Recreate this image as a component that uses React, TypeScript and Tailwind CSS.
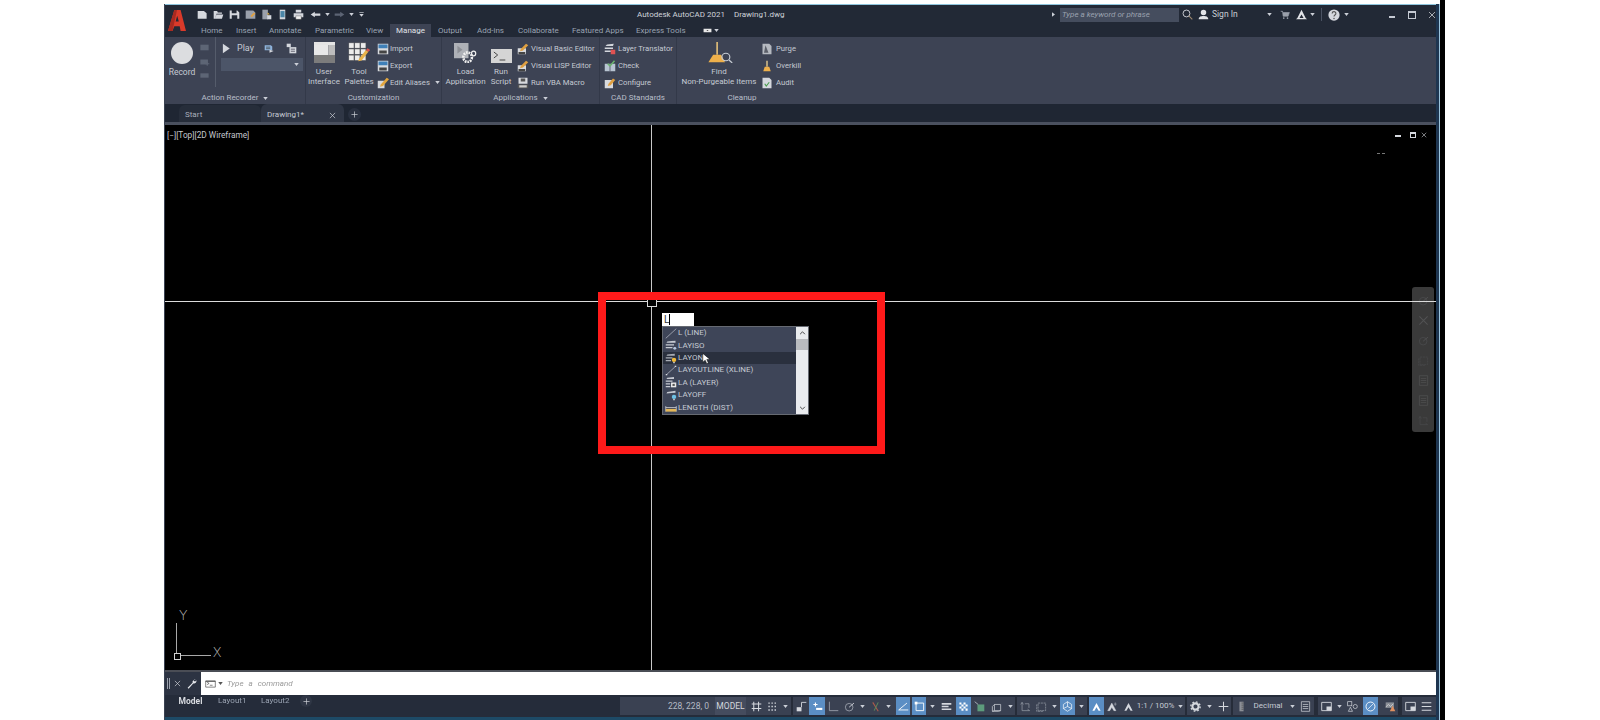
import React from "react";

const L = "#d5d8de";
const G = "#9aa0ab";
const B = "#8fb4dc";
const icons: Record<string, React.ReactNode> = {
  file: <path d="M1 3h9l4 3v8H1z" fill={L} />,
  open: <path d="M1 3h5l1 2h6v2H5l-2 7H1zM5 8h10l-2 6H3z" fill={L} />,
  save: <path d="M1 2h11l3 3v9H1zM4 2v4h7V2zM4 9v5h8V9z" fill={L} fillRule="evenodd" />,
  saveas: <g><path d="M1 2h11l3 3v9H1z" fill={G} /><path d="M8 10l5-5 2 2-5 5z" fill="#e0a040" /></g>,
  plot: <g><path d="M2 1h8v14H2z" fill={G} /><path d="M9 9h6v6H9z" fill={L} /><path d="M10 5l3 3H9z" fill="#e0b040" /></g>,
  phone: <g><path d="M4 1h8v14H4z" fill={L} /><path d="M5 3h6v9H5z" fill="#4b86a8" /></g>,
  print: <g><path d="M4 1h8v4H4zM1 6h14v6H1z" fill={L} /><path d="M4 10h8v5H4z" fill="#f2f2f2" stroke="#333" strokeWidth=".5" /></g>,
  undo: <path d="M7 3L1 8l6 5v-3h8V6H7z" fill={L} />,
  redo: <path d="M9 3l6 5-6 5v-3H1V6h8z" fill="#5c6474" />,
  qcaret: <g><path d="M3 3h10v1.5H3z" fill={L} /><path d="M3 7h10l-5 6z" fill={L} /></g>,
  square: <rect x="2" y="3" width="12" height="10" fill="#5d6575" />,
  stack: <g><path d="M2 4h11v8H2z" fill="#5d6575" /><path d="M9 10h6v1.5H9zM11.2 8h1.5v6h-1.5z" fill="#5d6575" /></g>,
  play: <path d="M3 1l11 7-11 7z" fill={L} />,
  playlist: <g><path d="M1 2h9l2 2v6H1z" fill={B} /><path d="M3 5h6M3 7.5h6" stroke="#333" /><path d="M8 9l6 2-6 3z" fill={L} /></g>,
  tab: <g><path d="M1 1h6v5H1z" fill={L} /><path d="M5 6h10v9H5z" fill={L} /><path d="M7 9h6M7 12h6" stroke="#334" /></g>,
  ui: <g><path d="M0 0h22v3H0z" fill="#e5e5e5" /><path d="M0 3h15v10H0z" fill="#e8e8e8" /><path d="M15 3h7v10h-7z" fill="#bdbdbd" /><path d="M0 13h22v8H0z" fill="#7c7c7c" /></g>,
  palette: <g>{[1, 8, 15].flatMap((x) => [1, 8, 15].map((y) => <rect key={`${x}${y}`} x={x} y={y} width="6" height="6" fill="#ececec" stroke="#555" strokeWidth=".5" />))}<path d="M13 19l8-10 3 2-8 10-4 1z" fill="#e8b24a" /><path d="M21 9l2-2 3 2-2 2z" fill="#d9534f" /></g>,
  imp: <g><path d="M1 1h14v14H1z" fill="#d8dade" /><path d="M2 2h12v5H2z" fill="#3f80b8" /><path d="M3 10h10v4H3z" fill="#444" /></g>,
  alias: <g><path d="M1 5h9v10H1z" fill="#d8dade" /><path d="M5 10l8-9 3 2-8 9-4 1z" fill="#e3a63d" /></g>,
  load: <g><path d="M0 0h17v16H0z" fill="#aeb1b7" /><path d="M4 3l6 4-6 4z" fill="#8d9096" /><circle cx="16" cy="15" r="5" fill="none" stroke="#f0f0f0" strokeWidth="3" strokeDasharray="2 1" /><circle cx="23" cy="11" r="2.5" fill="none" stroke="#f0f0f0" strokeWidth="1.4" /></g>,
  script: <g><path d="M0 0h22v14H0z" fill="#d5d5d5" /><path d="M3 3l4 3-4 3M9 11h6" stroke="#444" fill="none" /></g>,
  vb: <g><path d="M1 7h11v8H1z" fill="#d8dade" /><path d="M5 8l7-7 3 2-7 7-4 1z" fill="#e0a040" /><path d="M2 12h9v3H2z" fill="#444" /></g>,
  vba: <g><path d="M2 1h12v8H2z" fill="#d8dade" /><path d="M5 2h6v4H5z" fill="#555" /><path d="M1 10h14v5H1z" fill="#555" /><path d="M3 11h10v3H3z" fill="#ccc" /></g>,
  layer: <g><path d="M4 2l9-1-1 3H2zM1 6h11v2H1zM1 10h8v2H1z" fill="#d4d7dd" /><path d="M9 9h6v6H9z" fill="#e05252" /></g>,
  check: <g><path d="M1 5h14v10H1z" fill="#b8c4d2" /><path d="M8 5v10" stroke="#445" /><path d="M5 5l3 3 6-7" stroke="#69b36b" strokeWidth="2" fill="none" /></g>,
  conf: <g><path d="M1 4h11v11H1z" fill="#d8dade" /><path d="M6 9l6-7 3 2-6 7-4 1z" fill="#e0a040" /></g>,
  broom: <g><path d="M13 0h2v17h-2z" fill="#e6c27a" /><path d="M9 17h10l5 10H3z" fill="#eeb04b" /><circle cx="25" cy="20" r="5" fill="none" stroke="#c7ccd3" strokeWidth="1.5" /><path d="M29 24l4 4" stroke="#c7ccd3" strokeWidth="1.5" /></g>,
  purge: <g><path d="M2 1h9l3 3v11H2z" fill="#b5b9c0" /><path d="M6 3l4 10H4z" fill="#5b5f69" /></g>,
  over: <g><path d="M7 1h2v8H7z" fill="#d9c08a" /><path d="M5 9h6l2 6H3z" fill="#eeb04b" /></g>,
  audit: <g><path d="M2 1h9l3 3v11H2z" fill="#d5d8de" /><path d="M5 9l2 3 4-5" stroke="#4a9c4f" strokeWidth="1.5" fill="none" /></g>,
  search: <g><circle cx="6.5" cy="6.5" r="5" fill="none" stroke={L} strokeWidth="1.3" /><path d="M10 10l5 5" stroke="#9f8a70" strokeWidth="1.6" /></g>,
  user: <path d="M8 1a3.6 3.6 0 110 8 3.6 3.6 0 010-8zM1 15c0-4 3-5 7-5s7 1 7 5z" fill="#e2e4e8" />,
  cart: <g><path d="M1 2h3l1 8h8l2-6H5" fill={G} stroke={G} /><circle cx="6" cy="13" r="1.3" fill={G} /><circle cx="12" cy="13" r="1.3" fill={G} /></g>,
  aca: <path d="M8 1l6 12h-3L8 8l-3 5H2zM0 15l2-2h12l2 2z" fill="#e2e4e8" />,
  help: <g><circle cx="8" cy="8" r="7.5" fill="#d5d8de" /><path d="M5.5 6a2.5 2.5 0 115 0c0 2-2.5 2-2.5 4" stroke="#555" strokeWidth="1.5" fill="none" /><circle cx="8" cy="12.6" r="1" fill="#555" /></g>,
  logo: <g><path d="M4 22L11 0h7l6 22h-6l-1-5h-6l-2 5zM12.500 12h3.500l-1.800-6z" fill="#d93a2a" fillRule="evenodd" /><path d="M4 22L11 0h3L9 22z" fill="#a82a20" /></g>,
  grid: <path d="M4 1v14M11 1v14M1 4.500h14M1 11h14" stroke={L} strokeWidth="1.5" />,
  dots: <path d="M2 3h12M2 8h12M2 13h12" stroke={L} strokeWidth="2" strokeDasharray="2 2.500" />,
  infer: <g><path d="M1 9h7v6H1z" fill={L} /><path d="M8 9V2h7" stroke={L} fill="none" strokeWidth="1.3" /></g>,
  snapm: <g><path d="M2 5h6M5 2v6" stroke="#fff" strokeWidth="1.600" /><path d="M6 10h9v3H6z" fill="#fff" /></g>,
  ortho: <path d="M2 1v13h13" stroke={G} fill="none" strokeWidth="1.300" />,
  polar: <g><circle cx="7.500" cy="9" r="5.500" fill="none" stroke={G} strokeWidth="1.300" /><path d="M7.500 9l7-6" stroke={L} strokeWidth="1.300" /></g>,
  osnap: <g><path d="M4 2l8 13" stroke="#b05a4a" strokeWidth="1.500" /><path d="M12 2L6 14" stroke="#5d8c5d" strokeWidth="1.500" /></g>,
  angle: <path d="M1 13h14M1 13L13 3" stroke="#fff" fill="none" strokeWidth="1.300" />,
  isoBox: <g><path d="M3 3h11v11H3z" fill="none" stroke="#fff" strokeWidth="1.300" /><path d="M1 1h4v4H1z" fill="#fff" /></g>,
  lines: <path d="M1 3h14v2.500H1zM1 7h10v2H1zM1 11h14v2H1z" fill={L} />,
  checker: <path d="M2 2h3v3H2zM8 2h3v3H8zM5 5h3v3H5zM11 5h3v3h-3zM2 8h3v3H2zM8 8h3v3H8zM5 11h3v3H5zM11 11h3v3h-3z" fill="#fff" />,
  greenBox: <g><path d="M5 5h10v10H5z" fill="#5d9c7c" /><path d="M1 1l5 4" stroke={L} /></g>,
  cube: <path d="M5 5h9v9H5zM5 5l-3 3v7h9l3-1M2 15l3-1" stroke={L} fill="none" />,
  move: <path d="M3 2v12h11M3 2l-2 3M3 2l2 3M14 14l-3-2M7 4h6v6" stroke={G} fill="none" />,
  dashBox: <path d="M3 3h11v11H3zM1 5v10h10" stroke={G} fill="none" strokeDasharray="3 1" />,
  gizmo: <g><path d="M8 1l6 4v6l-6 4-6-4V5z" fill="none" stroke="#fff" /><path d="M8 8V1M8 8l-6 3M8 8l6 3" stroke="#fff" /></g>,
  an1: <path d="M8 3l6 11h-3L8 9l-3 5H2z" fill="#fff" />,
  an2: <path d="M7 3l6 11h-3L7 9l-3 5H1zM12 2v5M10 4.500h4" stroke={L} fill={L} strokeWidth=".6" />,
  an3: <path d="M8 3l6 11h-3L8 9l-3 5H2z" fill={L} />,
  gear: <g><circle cx="8" cy="8" r="4.500" fill="none" stroke={L} strokeWidth="3" /><circle cx="8" cy="8" r="6.800" fill="none" stroke={L} strokeWidth="2" strokeDasharray="2.500 2.800" /></g>,
  plus: <path d="M8 1v14M1 8h14" stroke={L} strokeWidth="1.500" />,
  ruler: <g><path d="M5 1h6v14H5z" fill="#8c8f96" /><path d="M8 3h3M8 6h3M8 9h3M8 12h3" stroke="#444" /></g>,
  sheet: <g><path d="M2 1h12v14H2z" fill="none" stroke={L} /><path d="M4 5h8M4 8h8M4 11h8" stroke={L} /></g>,
  vpbox: <g><path d="M1 2h14v12H1z" fill="none" stroke={L} strokeWidth="1.300" /><path d="M8 8h7v6H8z" fill={L} /></g>,
  shapes: <g><rect x="1" y="1" width="6" height="6" fill="none" stroke={L} /><circle cx="12" cy="8" r="3" fill="none" stroke={L} /><path d="M5 9l3 6H2z" fill="none" stroke={L} /></g>,
  ring: <g><circle cx="8" cy="8" r="6.500" fill="none" stroke="#fff" strokeWidth="1.300" /><path d="M4 12l8-8" stroke="#fff" /></g>,
  graph: <g><path d="M1 2h12v8H1z" fill="#8b8f97" /><path d="M1 9l4-4 3 3 4-4" stroke="#ddd" fill="none" /><path d="M11 7l4 8H7z" fill="#e09060" /></g>,
  menu: <path d="M1 2.500h14M1 8h14M1 13.500h14" stroke={L} strokeWidth="1.500" />,
  line: <path d="M1 15L15 1" stroke="#b9bec8" strokeWidth="1" />,
  layiso: <g><path d="M3 2l11-1v3H2zM1 6h11v2H1zM1 10h9v2H1z" fill="#c6cad2" /><circle cx="13" cy="12" r="2" fill="#b7c7de" /></g>,
  layon: <g><path d="M3 2l10-1v3H2zM1 6h9v2H1zM1 10h7v2H1z" fill="#a8acb5" /><circle cx="12" cy="10" r="3" fill="#f0b93a" /><path d="M11 13h2v2h-2z" fill="#ddd" /></g>,
  xline: <g><path d="M2 14L14 2" stroke="#b9bec8" /><path d="M1 13h2v2H1zM13 1h2v2h-2z" fill="#d8dbe0" /></g>,
  laylayer: <g><path d="M3 1l9-1v3H2zM1 5h9v2H1zM1 9h6v2H1zM1 13h6v2H1z" fill="#c6cad2" /><path d="M8 8h7v7H8z" fill="#e8e8e8" /><path d="M10 10h3v3h-3z" fill="#555" /></g>,
  layoff: <g><path d="M3 3l11-2v3l-12 1z" fill="#c6cad2" /><circle cx="12" cy="10" r="3" fill="#6ec1e4" /><path d="M11 13h2v2h-2z" fill="#ddd" /></g>,
  dist: <g><path d="M1 6v8M15 6v8M1 8h14" stroke="#d8dbe0" /><path d="M1 10h14v4H1z" fill="#e3b758" /></g>,
  term: <g><path d="M1 3h14v10H1z" fill="#fff" stroke="#444" /><path d="M3 5l3 2-3 2M7 10h4" stroke="#444" fill="none" /><path d="M1 3h14v1.500H1z" fill="#555" /></g>,
  wrench: <path d="M14 1a4 4 0 00-5 5L1 14l1.500 1.500L10 7a4 4 0 005-5l-2 2-2-1-.5-1.500z" fill="#e8eaee" />,
  x: <path d="M2 2l12 12M14 2L2 14" stroke={L} strokeWidth="1.500" />,
  tray: <g><path d="M1 4h14v8H1z" fill="#e8e8e8" /><path d="M6 9l2-2 2 2z" fill="#333" /></g>,
};

function Ico({ n, c = "w-[12px] h-[12px]", vb = "0 0 16 16" }: { n: string; c?: string; vb?: string }) {
  return (
    <svg viewBox={vb} className={`${c} shrink-0`} preserveAspectRatio="none">
      {icons[n]}
    </svg>
  );
}

function Caret({ c = "" }: { c?: string }) {
  return (
    <svg viewBox="0 0 6 4" className={`w-[5px] h-[3px] shrink-0 ${c}`}>
      <path d="M0 0h6L3 4z" fill="#ccd0d8" />
    </svg>
  );
}

function SmallRow({ n, t, gap, caret }: { n: string; t: string; gap: string; caret?: boolean }) {
  return (
    <div className={`h-[17px] flex items-center whitespace-nowrap text-[7.7px] ${gap}`}>
      <Ico n={n} />
      <span>{t}</span>
      {caret && <Caret c="ml-[4px]" />}
    </div>
  );
}

function Big({ w, n, ic, vb, a, b }: { w: string; n: string; ic: string; vb: string; a: string; b: string }) {
  return (
    <div className={`${w} flex flex-col items-center shrink-0`}>
      <div className="h-[30px] w-full flex items-end justify-center pb-[4px]">
        <Ico n={n} c={ic} vb={vb} />
      </div>
      <div className="h-[10px] leading-[10px]">{a}</div>
      <div className="h-[10px] leading-[10px] whitespace-nowrap">{b}</div>
    </div>
  );
}

function Panel({ w, label, caret, last, children }: { w: string; label: string; caret?: boolean; last?: boolean; children: React.ReactNode }) {
  return (
    <div className={`${w} h-full shrink-0 flex flex-col ${last ? "" : "border-r border-[#333949]"}`}>
      <div className="h-[53px] flex">{children}</div>
      <div className="h-[14px] flex items-center justify-center gap-[5px] text-[#b9bfca] leading-none pt-[2px]">
        <span>{label}</span>
        {caret && <Caret />}
      </div>
    </div>
  );
}

const qat: string[] = ["file", "open", "save", "saveas", "plot", "phone", "print"];

const mainTabs: [string, string][] = [
  ["Home", "w-[35px]"], ["Insert", "w-[33px]"], ["Annotate", "w-[46px]"], ["Parametric", "w-[51px]"], ["View", "w-[24px]"],
];
const mainTabs2: [string, string][] = [
  ["Output", "w-[39px]"], ["Add-ins", "w-[41px]"], ["Collaborate", "w-[54px]"], ["Featured Apps", "w-[64px]"], ["Express Tools", "w-[59px]"],
];

type S = { k: string; w: string; n?: string; on?: boolean; c?: boolean; t?: string; sep?: boolean };
const st: S[] = [
  { k: "a", w: "w-[15px]", n: "grid" },
  { k: "b", w: "w-[16px]", n: "dots" },
  { k: "c", w: "w-[11px]", c: true },
  { k: "d", w: "w-[2px]", sep: true },
  { k: "e", w: "w-[16px]", n: "infer" },
  { k: "f", w: "w-[16px]", n: "snapm", on: true },
  { k: "g", w: "w-[16px]", n: "ortho" },
  { k: "h", w: "w-[16px]", n: "polar" },
  { k: "i", w: "w-[10px]", c: true },
  { k: "j", w: "w-[16px]", n: "osnap" },
  { k: "l", w: "w-[11px]", c: true },
  { k: "m", w: "w-[2px]" },
  { k: "n", w: "w-[14px]", n: "angle", on: true },
  { k: "o", w: "w-[2px]" },
  { k: "p", w: "w-[14px]", n: "isoBox", on: true },
  { k: "q", w: "w-[12px]", c: true },
  { k: "r", w: "w-[16px]", n: "lines" },
  { k: "s", w: "w-[2px]" },
  { k: "t", w: "w-[15px]", n: "checker", on: true },
  { k: "u", w: "w-[17px]", n: "greenBox" },
  { k: "v", w: "w-[17px]", n: "cube" },
  { k: "w", w: "w-[10px]", c: true },
  { k: "x", w: "w-[2px]", sep: true },
  { k: "y", w: "w-[16px]", n: "move" },
  { k: "z", w: "w-[16px]", n: "dashBox" },
  { k: "aa", w: "w-[11px]", c: true },
  { k: "ab", w: "w-[15px]", n: "gizmo", on: true },
  { k: "ac", w: "w-[12px]", c: true },
  { k: "ad", w: "w-[2px]", sep: true },
  { k: "ae", w: "w-[15px]", n: "an1", on: true },
  { k: "af", w: "w-[16px]", n: "an2" },
  { k: "ag", w: "w-[16px]", n: "an3" },
  { k: "ah", w: "w-[39px]", t: "1:1 / 100%" },
  { k: "ai", w: "w-[10px]", c: true },
  { k: "aj", w: "w-[2px]", sep: true },
  { k: "ak", w: "w-[16px]", n: "gear" },
  { k: "al", w: "w-[12px]", c: true },
  { k: "am", w: "w-[16px]", n: "plus" },
  { k: "an", w: "w-[2px]", sep: true },
  { k: "ao", w: "w-[16px]", n: "ruler" },
  { k: "ap", w: "w-[38px]", t: "Decimal" },
  { k: "aq", w: "w-[10px]", c: true },
  { k: "ar", w: "w-[17px]", n: "sheet" },
  { k: "as", w: "w-[4px]", sep: true },
  { k: "at", w: "w-[17px]", n: "vpbox" },
  { k: "au", w: "w-[9px]", c: true },
  { k: "av", w: "w-[17px]", n: "shapes" },
  { k: "aw", w: "w-[2px]" },
  { k: "ax", w: "w-[15px]", n: "ring", on: true },
  { k: "ay", w: "w-[4px]" },
  { k: "az", w: "w-[16px]", n: "graph" },
  { k: "ba", w: "w-[4px]", sep: true },
  { k: "bb", w: "w-[16px]", n: "vpbox" },
  { k: "bc", w: "w-[1px]" },
  { k: "bd", w: "w-[14px]", n: "menu" },
];

const acRows: [string, string, boolean][] = [
  ["line", "L (LINE)", false],
  ["layiso", "LAYISO", false],
  ["layon", "LAYON", true],
  ["xline", "LAYOUTLINE (XLINE)", false],
  ["laylayer", "LA (LAYER)", false],
  ["layoff", "LAYOFF", false],
  ["dist", "LENGTH (DIST)", false],
];

export default function App() {
  return (
    <div className="w-[1600px] h-[720px] bg-white flex overflow-hidden font-['Roboto',sans-serif] text-[8px] text-[#c5cad3]">
      <div className="w-[164px] shrink-0" />
      <div className="w-[1272px] h-[716px] mt-[4px] shrink-0 flex flex-col blur-[0.4px] border-l border-[#3a4252]">
        {/* title bar */}
        <div className="h-[20px] shrink-0 bg-[#222936] border-t border-[#8ec5dd] flex items-center relative">
          <div className="w-[29px] shrink-0" />
          {qat.map((n) => (
            <div key={n} className="w-[16px] flex justify-center shrink-0">
              <Ico n={n} c="w-[11px] h-[11px]" />
            </div>
          ))}
          <div className="ml-[4px] flex items-center gap-[4px]">
            <Ico n="undo" c="w-[11px] h-[9px]" />
            <Caret />
            <Ico n="redo" c="w-[11px] h-[9px]" />
            <Caret />
            <Ico n="qcaret" c="w-[7px] h-[7px]" />
          </div>
          <div className="ml-[272px] whitespace-nowrap text-[8px] text-[#cfd3da] w-[150px] flex gap-[9px] shrink-0">
            <span>Autodesk AutoCAD 2021</span>
            <span>Drawing1.dwg</span>
          </div>
          <svg viewBox="0 0 4 6" className="ml-[265px] w-[3px] h-[5px] shrink-0"><path d="M0 0l4 3-4 3z" fill="#ccd0d8" /></svg>
          <div className="ml-[5px] w-[119px] h-[14px] bg-[#454d5e] italic text-[#9aa1ae] px-[2px] flex items-center whitespace-nowrap shrink-0">Type a keyword or phrase</div>
          <Ico n="search" c="ml-[3px] w-[11px] h-[11px]" />
          <Ico n="user" c="ml-[5px] w-[11px] h-[11px]" />
          <span className="ml-[3px] text-[8.5px] text-[#c9ced6] w-[60px]">Sign In</span>
          <Caret />
          <Ico n="cart" c="ml-[8px] w-[10px] h-[10px]" />
          <Ico n="aca" c="ml-[6px] w-[11px] h-[11px]" />
          <Caret c="ml-[3px]" />
          <div className="ml-[6px] w-[1px] h-[13px] bg-[#4a5262]" />
          <Ico n="help" c="ml-[6px] w-[12px] h-[12px]" />
          <Caret c="ml-[4px]" />
          <div className="ml-[40px] w-[6px] h-[2px] bg-[#c5cad3] mt-[5px]" />
          <div className="ml-[13px] w-[9px] h-[8px] border border-[#c5cad3] border-t-2" />
          <Ico n="x" c="ml-[12px] w-[8px] h-[8px]" />
          <div className="absolute left-[3px] top-[5px]">
            <Ico n="logo" c="w-[18px] h-[21px]" vb="4 0 20 22" />
          </div>
        </div>
        {/* tabs */}
        <div className="h-[13px] shrink-0 bg-[#222936] flex items-center text-[#9aa3b2]">
          <div className="w-[36px] shrink-0" />
          {mainTabs.map(([t, w]) => (
            <div key={t} className={`${w} shrink-0 whitespace-nowrap`}>{t}</div>
          ))}
          <div className="w-[41px] h-full shrink-0 bg-[#3d4354] text-[#e0e3e8] flex items-center justify-center">Manage</div>
          <div className="w-[7px] shrink-0" />
          {mainTabs2.map(([t, w]) => (
            <div key={t} className={`${w} shrink-0 whitespace-nowrap`}>{t}</div>
          ))}
          <Ico n="tray" c="ml-[8px] w-[9px] h-[7px]" />
          <Caret c="ml-[2px]" />
        </div>
        {/* ribbon */}
        <div className="h-[67px] shrink-0 bg-[#3d4354] flex">
          <Panel w="w-[141px]" label="Action Recorder" caret>
            <div className="w-[34px] flex flex-col items-center pt-[5px] shrink-0">
              <div className="w-[22px] h-[22px] rounded-full bg-[#dcdde0]" />
              <div className="mt-[3px] leading-[10px] text-[8.5px]">Record</div>
            </div>
            <div className="w-[17px] border-r border-[#555c6b] h-[50px] flex flex-col items-start gap-[5px] pt-[6px] shrink-0">
              <Ico n="square" c="w-[11px] h-[9px]" />
              <Ico n="stack" c="w-[11px] h-[10px]" />
              <Ico n="square" c="w-[11px] h-[7px]" />
            </div>
            <div className="pl-[5px] pt-[3px]">
              <div className="h-[16px] flex items-center text-[9px] pt-[1px]">
                <Ico n="play" c="w-[10px] h-[11px]" />
                <span className="ml-[6px]">Play</span>
                <Ico n="playlist" c="ml-[10px] w-[11px] h-[10px]" />
                <Ico n="tab" c="ml-[11px] w-[11px] h-[11px]" />
              </div>
              <div className="mt-[2px] w-[82px] h-[13px] bg-[#4c5568] flex items-center justify-end pr-[4px]">
                <Caret />
              </div>
            </div>
          </Panel>
          <Panel w="w-[136px]" label="Customization">
            <Big w="w-[36px]" n="ui" ic="w-[21px] h-[21px]" vb="0 0 22 21" a="User" b="Interface" />
            <Big w="w-[34px]" n="palette" ic="w-[23px] h-[21px]" vb="0 0 27 24" a="Tool" b="Palettes" />
            <div className="pt-[3px] pl-[1px]">
              <SmallRow n="imp" t="Import" gap="gap-[1px]" />
              <SmallRow n="imp" t="Export" gap="gap-[1px]" />
              <SmallRow n="alias" t="Edit Aliases" gap="gap-[1px]" caret />
            </div>
          </Panel>
          <Panel w="w-[158px]" label="Applications" caret>
            <Big w="w-[47px]" n="load" ic="w-[23px] h-[20px]" vb="0 0 27 21" a="Load" b="Application" />
            <Big w="w-[24px]" n="script" ic="w-[21px] h-[14px]" vb="0 0 22 14" a="Run" b="Script" />
            <div className="pt-[3px] pl-[4px]">
              <SmallRow n="vb" t="Visual Basic Editor" gap="gap-[2px]" />
              <SmallRow n="vb" t="Visual LISP Editor" gap="gap-[2px]" />
              <SmallRow n="vba" t="Run VBA Macro" gap="gap-[2px]" />
            </div>
          </Panel>
          <Panel w="w-[77px]" label="CAD Standards">
            <div className="pt-[3px] pl-[4px]">
              <SmallRow n="layer" t="Layer Translator" gap="gap-[2px]" />
              <SmallRow n="check" t="Check" gap="gap-[2px]" />
              <SmallRow n="conf" t="Configure" gap="gap-[2px]" />
            </div>
          </Panel>
          <Panel w="w-[130px]" label="Cleanup" last>
            <Big w="w-[84px]" n="broom" ic="w-[27px] h-[21px]" vb="0 0 34 28" a="Find" b="Non-Purgeable Items" />
            <div className="pt-[3px]">
              <SmallRow n="purge" t="Purge" gap="gap-[3px]" />
              <SmallRow n="over" t="Overkill" gap="gap-[3px]" />
              <SmallRow n="audit" t="Audit" gap="gap-[3px]" />
            </div>
          </Panel>
          <div className="flex-1" />
        </div>
        {/* file tabs */}
        <div className="h-[21px] shrink-0 bg-[#1f2633] flex flex-col">
          <div className="h-[18px] flex items-end">
            <div className="w-[14px] shrink-0" />
            <div className="w-[82px] h-[17px] shrink-0 bg-[#262d3a] rounded-t-[6px] pl-[6px] pt-[3px] flex items-center text-[#a9afba]">Start</div>
            <div className="w-[83px] h-[18px] shrink-0 bg-[#2f3645] rounded-t-[6px] pl-[6px] pt-[4px] flex items-center text-[#c5cad3]">
              <span className="w-[62px]">Drawing1*</span>
              <Ico n="x" c="w-[7px] h-[7px]" />
            </div>
            <div className="ml-[4px] mb-[1px] w-[13px] h-[13px] rounded-full bg-[#2a3140] flex items-center justify-center">
              <Ico n="plus" c="w-[7px] h-[7px]" />
            </div>
          </div>
          <div className="h-[3px] bg-[#4a505e]" />
        </div>
        {/* canvas */}
        <div className="h-[545px] shrink-0 bg-black relative">
          <div className="absolute left-[2px] top-[4px] text-[#c5c8ce] text-[8.3px] whitespace-nowrap">[−][Top][2D Wireframe]</div>
          <div className="absolute left-[1230px] top-[10px] w-[6px] h-[2px] bg-[#d5d8de]" />
          <div className="absolute left-[1245px] top-[7px] w-[6px] h-[6px] border border-[#d5d8de] border-t-2" />
          <Ico n="x" c="absolute left-[1256px] top-[7px] w-[6px] h-[6px]" />
          <div className="absolute left-[1212px] top-[28px] w-[8px] h-[1px] border-t border-dashed border-[#777]" />
          {/* nav bar */}
          <div className="absolute left-[1247px] top-[162px] w-[22px] h-[145px] bg-[#3a3a3a] rounded-[3px] flex flex-col items-center gap-[9px] pt-[8px]">
            {["polar", "x", "polar", "dashBox", "sheet", "sheet", "move"].map((n, i) => (
              <div key={i} className="opacity-15"><Ico n={n} c="w-[11px] h-[11px]" /></div>
            ))}
          </div>
          {/* crosshair */}
          <div className="absolute left-[486px] top-0 bottom-0 w-[1px] bg-[#c8c8c8]" />
          <div className="absolute left-0 right-0 top-[176px] h-[1px] bg-[#dcdcdc]" />
          <div className="absolute left-[482px] top-[172px] w-[10px] h-[10px] bg-black border border-[#d8d8d8]" />
          {/* command autocomplete */}
          <div className="absolute left-[497px] top-[188px] w-[32px] h-[13px] bg-white text-[#333] text-[10px] leading-[13px] pl-[2px]">
            L<span className="border-l border-black" />
          </div>
          <div className="absolute left-[497px] top-[201px] w-[147px] h-[89px] border border-[#666a72] bg-[#3e4558] flex">
            <div className="flex-1 flex flex-col min-h-0">
              {acRows.map(([n, t, hi]) => (
                <div key={t} className={`flex-1 min-h-0 flex items-center pl-[2px] gap-[1px] leading-none text-[8px] text-[#c5cad3] whitespace-nowrap ${hi ? "bg-[#2a303e]" : ""}`}>
                  <Ico n={n} c="w-[12px] h-[11px]" />
                  <span>{t}</span>
                </div>
              ))}
            </div>
            <div className="w-[12px] bg-[#e9ebee] flex flex-col items-center py-[4px] shrink-0">
              <svg viewBox="0 0 8 5" className="w-[7px] h-[4px]"><path d="M1 4l3-3 3 3" stroke="#444" fill="none" strokeWidth="1.200" /></svg>
              <div className="mt-[4px] w-full h-[11px] bg-[#b9bbbf]" />
              <div className="flex-1" />
              <svg viewBox="0 0 8 5" className="w-[7px] h-[4px]"><path d="M1 1l3 3 3-3" stroke="#444" fill="none" strokeWidth="1.200" /></svg>
            </div>
          </div>
          <svg viewBox="0 0 10 14" className="absolute left-[537px] top-[228px] w-[8px] h-[12px]">
            <path d="M1 0v11l3-2.500 2 4.500 2-1-2-4.500h4z" fill="#fff" stroke="#000" strokeWidth=".6" />
          </svg>
          {/* annotation */}
          <div className="absolute left-[433px] top-[167px] w-[287px] h-[162px] border-[8px] border-[#ff1a1a]" />
          {/* UCS */}
          <div className="absolute left-[11px] top-[498px] w-[1px] h-[33px] bg-[#a8a8a8]" />
          <div className="absolute left-[11px] top-[530px] w-[35px] h-[1px] bg-[#a8a8a8]" />
          <div className="absolute left-[9px] top-[528px] w-[7px] h-[7px] border border-[#d0d0d0] bg-black" />
          <div className="absolute left-[14px] top-[484px] text-[13px] leading-none font-['Inter',sans-serif] font-extralight text-[#c0c0c0]">Y</div>
          <div className="absolute left-[48px] top-[521px] text-[13px] leading-none font-['Inter',sans-serif] font-extralight text-[#c0c0c0]">X</div>
        </div>
        {/* command line */}
        <div className="h-[2px] shrink-0 bg-[#4a4d55]" />
        <div className="h-[23px] shrink-0 flex bg-[#2c3342]">
          <div className="w-[36px] shrink-0 flex items-center pl-[2px]">
            <div className="w-[3px] h-[11px] border-x border-[#9ba1ad]" />
            <Ico n="x" c="ml-[4px] w-[7px] h-[7px]" />
            <Ico n="wrench" c="ml-[6px] w-[10px] h-[10px]" />
          </div>
          <div className="flex-1 bg-white flex items-center pl-[4px]">
            <Ico n="term" c="w-[11px] h-[10px]" />
            <svg viewBox="0 0 6 4" className="ml-[2px] w-[5px] h-[3px]"><path d="M0 0h6L3 4z" fill="#555" /></svg>
            <span className="ml-[4px] italic text-[#9a9a9a] text-[8px] [word-spacing:3px]">Type a command</span>
          </div>
        </div>
        {/* status */}
        <div className="h-[22px] shrink-0 bg-[#252c3a] flex items-center">
          <div className="w-[8px] shrink-0" />
          <div className="w-[35px] h-[12px] self-start shrink-0 flex items-center justify-center font-bold text-[8.5px] text-[#d8dbe0]">Model</div>
          <div className="w-[10px] shrink-0" />
          <div className="w-[43px] h-[12px] self-start flex items-center shrink-0 text-[#9aa3b2]">Layout1</div>
          <div className="w-[39px] h-[12px] self-start flex items-center shrink-0 text-[#9aa3b2]">Layout2</div>
          <div className="w-[12px] h-[12px] self-start rounded-full bg-[#2f3645] flex items-center justify-center shrink-0">
            <Ico n="plus" c="w-[7px] h-[7px]" />
          </div>
          <div className="w-[308px] shrink-0" />
          <div className="flex-1 h-[18px] bg-[#3a4152] flex items-center min-w-0">
            <div className="w-[89px] shrink-0 text-right text-[#b4bac5] text-[8.5px] whitespace-nowrap">228, 228, 0</div>
            <div className="ml-[6px] w-[31px] h-full shrink-0 bg-[#454c5e] text-[#d3d6dc] text-[8.5px] flex items-center justify-center">MODEL</div>
            <div className="w-[3px] shrink-0" />
            {st.map((s) => (
              <div key={s.k} className={`${s.w} h-full shrink-0 flex items-center justify-center whitespace-nowrap text-[8px] ${s.on ? "bg-[#5b8ec4]" : ""} ${s.sep ? "bg-[#262c39]" : ""}`}>
                {s.n && <Ico n={s.n} c="w-[11px] h-[11px]" />}
                {s.c && <Caret />}
                {s.t}
              </div>
            ))}
          </div>
        </div>
        <div className="h-[3px] shrink-0 bg-[#1d4a66]" />
      </div>
      <div className="w-[3px] mt-[4px] shrink-0 bg-[#1e3550]" />
      <div className="w-[1px] mt-[4px] shrink-0 bg-[#9cc4dc]" />
      <div className="w-[5px] shrink-0 bg-black" />
    </div>
  );
}
